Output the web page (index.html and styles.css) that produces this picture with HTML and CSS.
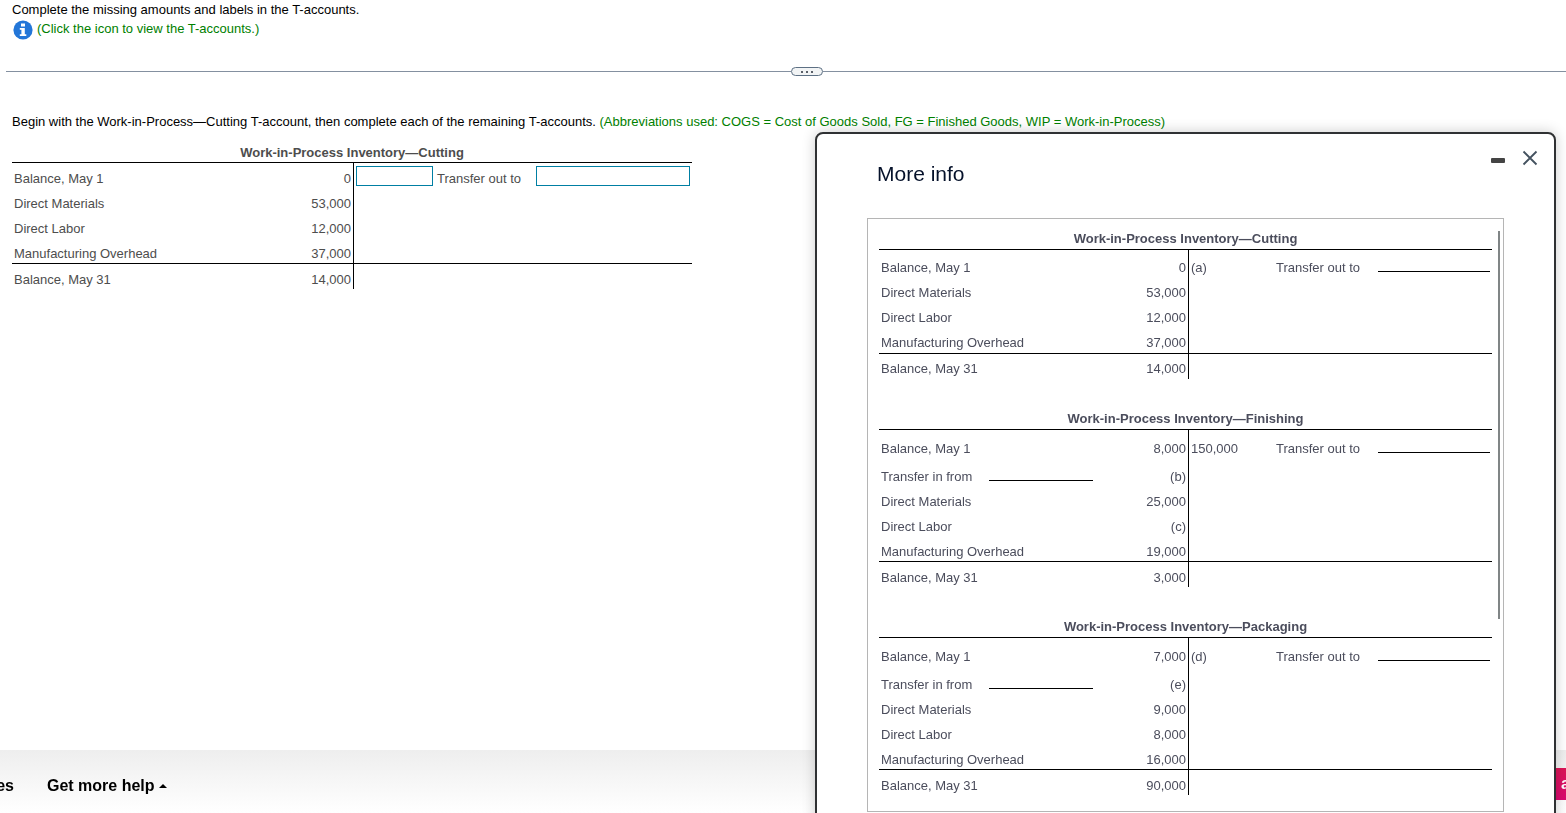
FILE: index.html
```
<!DOCTYPE html>
<html lang="en">
<head>
<meta charset="utf-8">
<title>T-accounts</title>
<link rel="stylesheet" href="styles.css">
</head>
<body>
<main class="page">
  <section class="intro">
    <p class="line">Complete the missing amounts and labels in the T-accounts.</p>
    <a class="info-link" href="#more-info">
      <svg class="info-icon" viewBox="0 0 20 20" aria-hidden="true">
        <circle cx="10" cy="10" r="9.6" fill="#2376d8"/>
        <path d="M8 3.4h4v3H8zM6.8 8h5v6.2h1.500V16H6.8v-1.800h1.600V9.800H6.8z" fill="#fff"/>
      </svg>
      <span>(Click the icon to view the T-accounts.)</span>
    </a>
  </section>
  <div class="splitter">
    <span class="rule rule-left"></span>
    <button class="grip" type="button" aria-label="Resize panes"><i></i><i></i><i></i></button>
    <span class="rule rule-right"></span>
  </div>
  <section class="work">
    <p class="line">Begin with the Work-in-Process—Cutting T-account, then complete each of the remaining T-accounts. <span class="note">(Abbreviations used: COGS = Cost of Goods Sold, FG = Finished Goods, WIP = Work-in-Process)</span></p>
    <table class="account entry">
      <colgroup><col class="c-label"><col class="c-value"><col class="c-amount"><col class="c-text"><col class="c-blank"></colgroup>
      <thead><tr><th colspan="5">Work-in-Process Inventory—Cutting</th></tr></thead>
      <tbody>
        <tr><td>Balance, May 1</td><td class="num">0</td><td class="field"><input class="box" type="text" aria-label="Credit amount"></td><td>Transfer out to</td><td class="field"><input class="box" type="text" aria-label="Transfer out to"></td></tr>
        <tr><td>Direct Materials</td><td class="num">53,000</td><td colspan="3"></td></tr>
        <tr><td>Direct Labor</td><td class="num">12,000</td><td colspan="3"></td></tr>
        <tr><td>Manufacturing Overhead</td><td class="num">37,000</td><td colspan="3"></td></tr>
      </tbody>
      <tfoot><tr><td>Balance, May 31</td><td class="num">14,000</td><td colspan="3"></td></tr></tfoot>
    </table>
  </section>
</main>

<footer class="footer">
  <a class="foot-link clipped" href="#">es</a>
  <button class="foot-link help" type="button">Get more help <svg class="caret" viewBox="0 0 8 4" aria-hidden="true"><path d="M0 4L4 0l4 4z"/></svg></button>
  <button class="side-tab" type="button">a</button>
</footer>

<section class="dialog" id="more-info" role="dialog" aria-labelledby="dialog-title">
  <header class="dialog-head">
    <h2 id="dialog-title">More info</h2>
    <button class="tool" type="button" aria-label="Minimize"><svg viewBox="0 0 16 16"><rect x="1" y="8" width="14" height="5" rx="1" fill="#444"/></svg></button>
    <button class="tool" type="button" aria-label="Close"><svg viewBox="0 0 16 16"><path d="M1.500 1.500l13 13M14.500 1.500l-13 13" stroke="#44525f" stroke-width="1.800" fill="none"/></svg></button>
  </header>
  <div class="accounts">
    <span class="thumb"></span>
    <table class="account view">
      <colgroup><col class="c-label"><col class="c-value"><col class="c-amount"><col class="c-text"><col class="c-blank"></colgroup>
      <thead><tr><th colspan="5">Work-in-Process Inventory—Cutting</th></tr></thead>
      <tbody>
        <tr class="tall"><td>Balance, May 1</td><td class="num">0</td><td>(a)</td><td>Transfer out to</td><td><span class="blank"></span></td></tr>
        <tr><td>Direct Materials</td><td class="num">53,000</td><td colspan="3"></td></tr>
        <tr><td>Direct Labor</td><td class="num">12,000</td><td colspan="3"></td></tr>
        <tr><td>Manufacturing Overhead</td><td class="num">37,000</td><td colspan="3"></td></tr>
      </tbody>
      <tfoot><tr><td>Balance, May 31</td><td class="num">14,000</td><td colspan="3"></td></tr></tfoot>
    </table>
    <table class="account view">
      <colgroup><col class="c-label"><col class="c-value"><col class="c-amount"><col class="c-text"><col class="c-blank"></colgroup>
      <thead><tr><th colspan="5">Work-in-Process Inventory—Finishing</th></tr></thead>
      <tbody>
        <tr class="tall"><td>Balance, May 1</td><td class="num">8,000</td><td>150,000</td><td>Transfer out to</td><td><span class="blank"></span></td></tr>
        <tr class="tall"><td><span class="from"><span>Transfer in from</span><span class="blank"></span></span></td><td class="num">(b)</td><td colspan="3"></td></tr>
        <tr><td>Direct Materials</td><td class="num">25,000</td><td colspan="3"></td></tr>
        <tr><td>Direct Labor</td><td class="num">(c)</td><td colspan="3"></td></tr>
        <tr><td>Manufacturing Overhead</td><td class="num">19,000</td><td colspan="3"></td></tr>
      </tbody>
      <tfoot><tr><td>Balance, May 31</td><td class="num">3,000</td><td colspan="3"></td></tr></tfoot>
    </table>
    <table class="account view">
      <colgroup><col class="c-label"><col class="c-value"><col class="c-amount"><col class="c-text"><col class="c-blank"></colgroup>
      <thead><tr><th colspan="5">Work-in-Process Inventory—Packaging</th></tr></thead>
      <tbody>
        <tr class="tall"><td>Balance, May 1</td><td class="num">7,000</td><td>(d)</td><td>Transfer out to</td><td><span class="blank"></span></td></tr>
        <tr class="tall"><td><span class="from"><span>Transfer in from</span><span class="blank"></span></span></td><td class="num">(e)</td><td colspan="3"></td></tr>
        <tr><td>Direct Materials</td><td class="num">9,000</td><td colspan="3"></td></tr>
        <tr><td>Direct Labor</td><td class="num">8,000</td><td colspan="3"></td></tr>
        <tr><td>Manufacturing Overhead</td><td class="num">16,000</td><td colspan="3"></td></tr>
      </tbody>
      <tfoot><tr><td>Balance, May 31</td><td class="num">90,000</td><td colspan="3"></td></tr></tfoot>
    </table>
  </div>
</section>
</body>
</html>
```
FILE: styles.css
```
* { box-sizing: border-box; }
html, body { height: 100%; }
body {
  margin: 0;
  overflow: hidden;
  background: #fff;
  color: #000;
  font: 13px/16px "Liberation Sans", Arial, sans-serif;
}
button { margin: 0; padding: 0; border: 0; background: none; font: inherit; color: inherit; }
.line { margin: 0; white-space: nowrap; }
.note { color: #008000; }

.intro { padding: 2px 12px 0; }
.info-link {
  display: flex;
  align-items: flex-start;
  gap: 4px;
  padding: 2px 0 0 1px;
  color: #008000;
  text-decoration: none;
}
.info-link span { padding-top: 1px; }
.info-icon { width: 20px; height: 20px; }

.splitter { display: flex; align-items: center; height: 9px; margin: 27px 0 0 6px; }
.rule { height: 1px; background: #8490a0; }
.rule-left { flex: 785; }
.rule-right { flex: 743; }
.grip {
  display: flex;
  align-items: center;
  justify-content: center;
  gap: 3px;
  width: 32px;
  height: 9px;
  border: 1px solid #5d7084;
  border-radius: 5px;
  background: #f2f4f5;
}
.grip i { width: 2px; height: 2px; background: #5a6069; }

.work { padding: 38px 12px 0; }

.account {
  table-layout: fixed;
  border-collapse: separate;
  border-spacing: 0;
  color: #4d4d4d;
}
.account th { height: 26px; padding: 0 0 2px; border-bottom: 1px solid #000; vertical-align: bottom; }
.account td { height: 25px; padding: 0 2px 2px; vertical-align: bottom; white-space: nowrap; }
.account .tall td { height: 28px; }
.account .num { border-right: 1px solid #000; text-align: right; }
.account tfoot td { height: 26px; border-top: 1px solid #000; }
.entry th, .entry td, .view + .view td { padding-bottom: 1px; }
.account .field { padding: 0 2px; vertical-align: middle; }
.box { display: block; width: 100%; height: 20px; padding: 0 2px; border: 1px solid #007fa3; border-radius: 0; background: #fff; font: inherit; }
.entry { width: 680px; margin-top: 7px; }
.entry .c-label { width: 200px; }
.entry .c-value { width: 142px; }
.entry .c-amount { width: 81px; }
.entry .c-text { width: 99px; }

.footer {
  position: fixed;
  right: 0;
  bottom: 0;
  left: 0;
  display: flex;
  align-items: center;
  height: 63px;
  padding-top: 8px;
  background: linear-gradient(#eee, #fff);
}
.foot-link { font-size: 16px; line-height: 20px; font-weight: bold; color: #000; text-decoration: none; }
.clipped { display: flex; justify-content: flex-end; width: 14px; }
.help { margin-left: 33px; }
.caret { width: 8px; height: 4px; vertical-align: middle; }
.side-tab {
  align-self: flex-end;
  width: 16px;
  height: 32px;
  margin: 0 0 13px auto;
  padding-left: 11px;
  overflow: hidden;
  background: linear-gradient(#db1657, #db0a70);
  color: #fff;
  font-size: 16px;
  font-weight: bold;
  text-align: left;
}

.dialog {
  position: fixed;
  top: 132px;
  right: 10px;
  width: 741px;
  padding: 0 50px 40px;
  border: 2px solid #2f3133;
  border-radius: 8px;
  background: #fff;
  box-shadow: 0 0 14px rgba(0, 0, 0, .2);
}
.dialog-head { display: flex; gap: 16px; height: 84px; margin-right: -34px; padding: 16px 0 0 10px; }
.dialog-head h2 { flex: 1; margin: 0; padding-top: 12px; font-size: 21px; line-height: 24px; font-weight: normal; color: #05112a; }
.tool { width: 16px; height: 16px; }
.tool svg { display: block; width: 16px; height: 16px; }
.accounts {
  position: relative;
  display: flex;
  flex-direction: column;
  gap: 25px;
  padding: 5px 11px 16px;
  border: 1px solid #b5b5b5;
}
.accounts .account { color: #4b4d5c; }
.thumb { position: absolute; top: 12px; right: 3px; width: 2px; height: 388px; background: #808586; }
.view { width: 100%; }
.view .c-label { width: 216px; }
.view .c-value { width: 94px; }
.view .c-amount { width: 85px; }
.view .c-text { width: 102px; }
.blank { display: inline-block; width: 100%; border-bottom: 1px solid #000; }
.from { display: flex; align-items: baseline; gap: 17px; }
.from .blank { flex: none; width: 104px; }
```
